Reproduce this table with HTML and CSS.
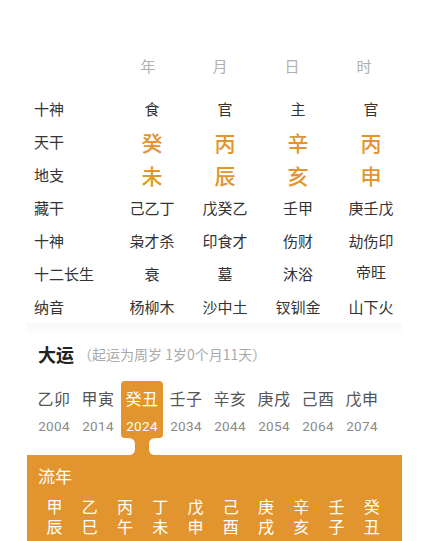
FILE: index.html
```html
<!DOCTYPE html>
<html lang="zh">
<head>
<meta charset="utf-8">
<link rel="stylesheet" href="styles.css">
</head>
<body>
<div class="page">
  <div class="chart">
    <div class="row head">
      <div class="lab"></div>
      <div class="c">年</div><div class="c">月</div><div class="c">日</div><div class="c">时</div>
    </div>
    <div class="row"><div class="lab">十神</div><div class="c">食</div><div class="c">官</div><div class="c">主</div><div class="c">官</div></div>
    <div class="row big"><div class="lab">天干</div><div class="c">癸</div><div class="c">丙</div><div class="c">辛</div><div class="c">丙</div></div>
    <div class="row big"><div class="lab">地支</div><div class="c">未</div><div class="c">辰</div><div class="c">亥</div><div class="c">申</div></div>
    <div class="row"><div class="lab">藏干</div><div class="c">己乙丁</div><div class="c">戊癸乙</div><div class="c">壬甲</div><div class="c">庚壬戊</div></div>
    <div class="row"><div class="lab">十神</div><div class="c">枭才杀</div><div class="c">印食才</div><div class="c">伤财</div><div class="c">劫伤印</div></div>
    <div class="row"><div class="lab">十二长生</div><div class="c">衰</div><div class="c">墓</div><div class="c">沐浴</div><div class="c up">帝旺</div></div>
    <div class="row"><div class="lab">纳音</div><div class="c">杨柳木</div><div class="c">沙中土</div><div class="c">钗钏金</div><div class="c">山下火</div></div>
  </div>
  <div class="fade"></div>
  <div class="dayun">
    <div class="title"><span class="t">大运</span><span class="sub">（起运为周岁 1岁0个月11天）</span></div>
    <div class="items">
      <div class="item"><div class="gz">乙卯</div><div class="yr">2004</div></div>
      <div class="item"><div class="gz">甲寅</div><div class="yr">2014</div></div>
      <div class="item active"><div class="gz">癸丑</div><div class="yr">2024</div>
        <svg class="stem" width="30" height="18" viewBox="0 0 30 18"><path d="M0 0 H30 C23 0 22 3 22 7 V10 C22 15 24 17 30 18 H0 C6 17 8 15 8 10 V7 C8 3 7 0 0 0 Z" fill="#E2952F"/></svg>
      </div>
      <div class="item"><div class="gz">壬子</div><div class="yr">2034</div></div>
      <div class="item"><div class="gz">辛亥</div><div class="yr">2044</div></div>
      <div class="item"><div class="gz">庚戌</div><div class="yr">2054</div></div>
      <div class="item"><div class="gz">己酉</div><div class="yr">2064</div></div>
      <div class="item"><div class="gz">戊申</div><div class="yr">2074</div></div>
    </div>
  </div>
  <div class="liunian">
    <div class="lt">流年</div>
    <div class="grid">
      <div class="col"><span>甲</span><span>辰</span></div>
      <div class="col"><span>乙</span><span>巳</span></div>
      <div class="col"><span>丙</span><span>午</span></div>
      <div class="col"><span>丁</span><span>未</span></div>
      <div class="col"><span>戊</span><span>申</span></div>
      <div class="col"><span>己</span><span>酉</span></div>
      <div class="col"><span>庚</span><span>戌</span></div>
      <div class="col"><span>辛</span><span>亥</span></div>
      <div class="col"><span>壬</span><span>子</span></div>
      <div class="col"><span>癸</span><span>丑</span></div>
    </div>
  </div>
</div>
</body>
</html>
```

FILE: styles.css
```css
* { box-sizing: border-box; }
html, body { margin: 0; padding: 0; background: #fff; }
body {
  font-family: "Noto Sans CJK SC", "Noto Sans", sans-serif;
  color: #333;
  width: 426px;
  height: 541px;
  overflow: hidden;
}
.page { width: 426px; }
.chart { padding: 50px 0 0 34px; }
.row {
  display: grid;
  grid-template-columns: 81.5px repeat(4, 73px);
  height: 33px;
  align-items: center;
  font-size: 15px;
  line-height: 20px;
}
.row.head { height: 42px; align-items: start; padding-top: 6px; color: #b0b0b0; font-size: 15px; }
.row.head .c:nth-child(2) { transform: translateX(-4px); }
.row.head .c:nth-child(3) { transform: translateX(-5px); }
.row.head .c:nth-child(4) { transform: translateX(-6px); }
.row.head .c:nth-child(5) { transform: translateX(-7px); }
.lab { color: #333; }
.c { text-align: center; }
.c.up { transform: translateY(-2px); }
.row.big .c { color: #E2952F; font-size: 21px; line-height: 24px; font-weight: 500; }
.fade {
  margin: 0 24px 0 27px;
  height: 13px;
  background: linear-gradient(#f8f8f8, #fff);
}
.dayun { padding: 5px 0 0 0; }
.title { display: flex; align-items: center; height: 26px; padding-left: 38px; }
.title .t { font-size: 18px; font-weight: 700; color: #222; }
.title .sub { font-size: 14px; color: #aaa; margin-left: 4px; }
.items { display: flex; padding-left: 32px; margin-top: 14px; margin-bottom: 17px; }
.item {
  width: 44px;
  height: 57px;
  padding-top: 7px;
  text-align: center;
  position: relative;
}
.item .gz { font-size: 16px; line-height: 20px; color: #555; letter-spacing: 0.5px; }
.item .yr { font-size: 13.5px; line-height: 18px; color: #8a8a8a; margin-top: 9px; font-family: "Roboto", "Noto Sans", sans-serif; letter-spacing: 0.3px; }
.item.active { background: #E2952F; border-radius: 4px; width: 42px; margin: 0 1px; }
.item.active .gz, .item.active .yr { color: #fff; }
.stem { position: absolute; left: 6px; top: 57px; display: block; }
.liunian {
  margin: 0 24px 0 27px;
  background: #E2952F;
  color: #fff;
  padding: 10px 0 0 10px;
  height: 100px;
}
.lt { font-size: 17px; line-height: 22px; padding-left: 1px; }
.grid {
  display: grid;
  grid-template-columns: repeat(10, 35.25px);
  margin-top: 9px;
  font-size: 16px;
  line-height: 20px;
  text-align: center;
}
.col { display: flex; flex-direction: column; align-items: center; }
.col span { display: block; height: 20px; }
```
